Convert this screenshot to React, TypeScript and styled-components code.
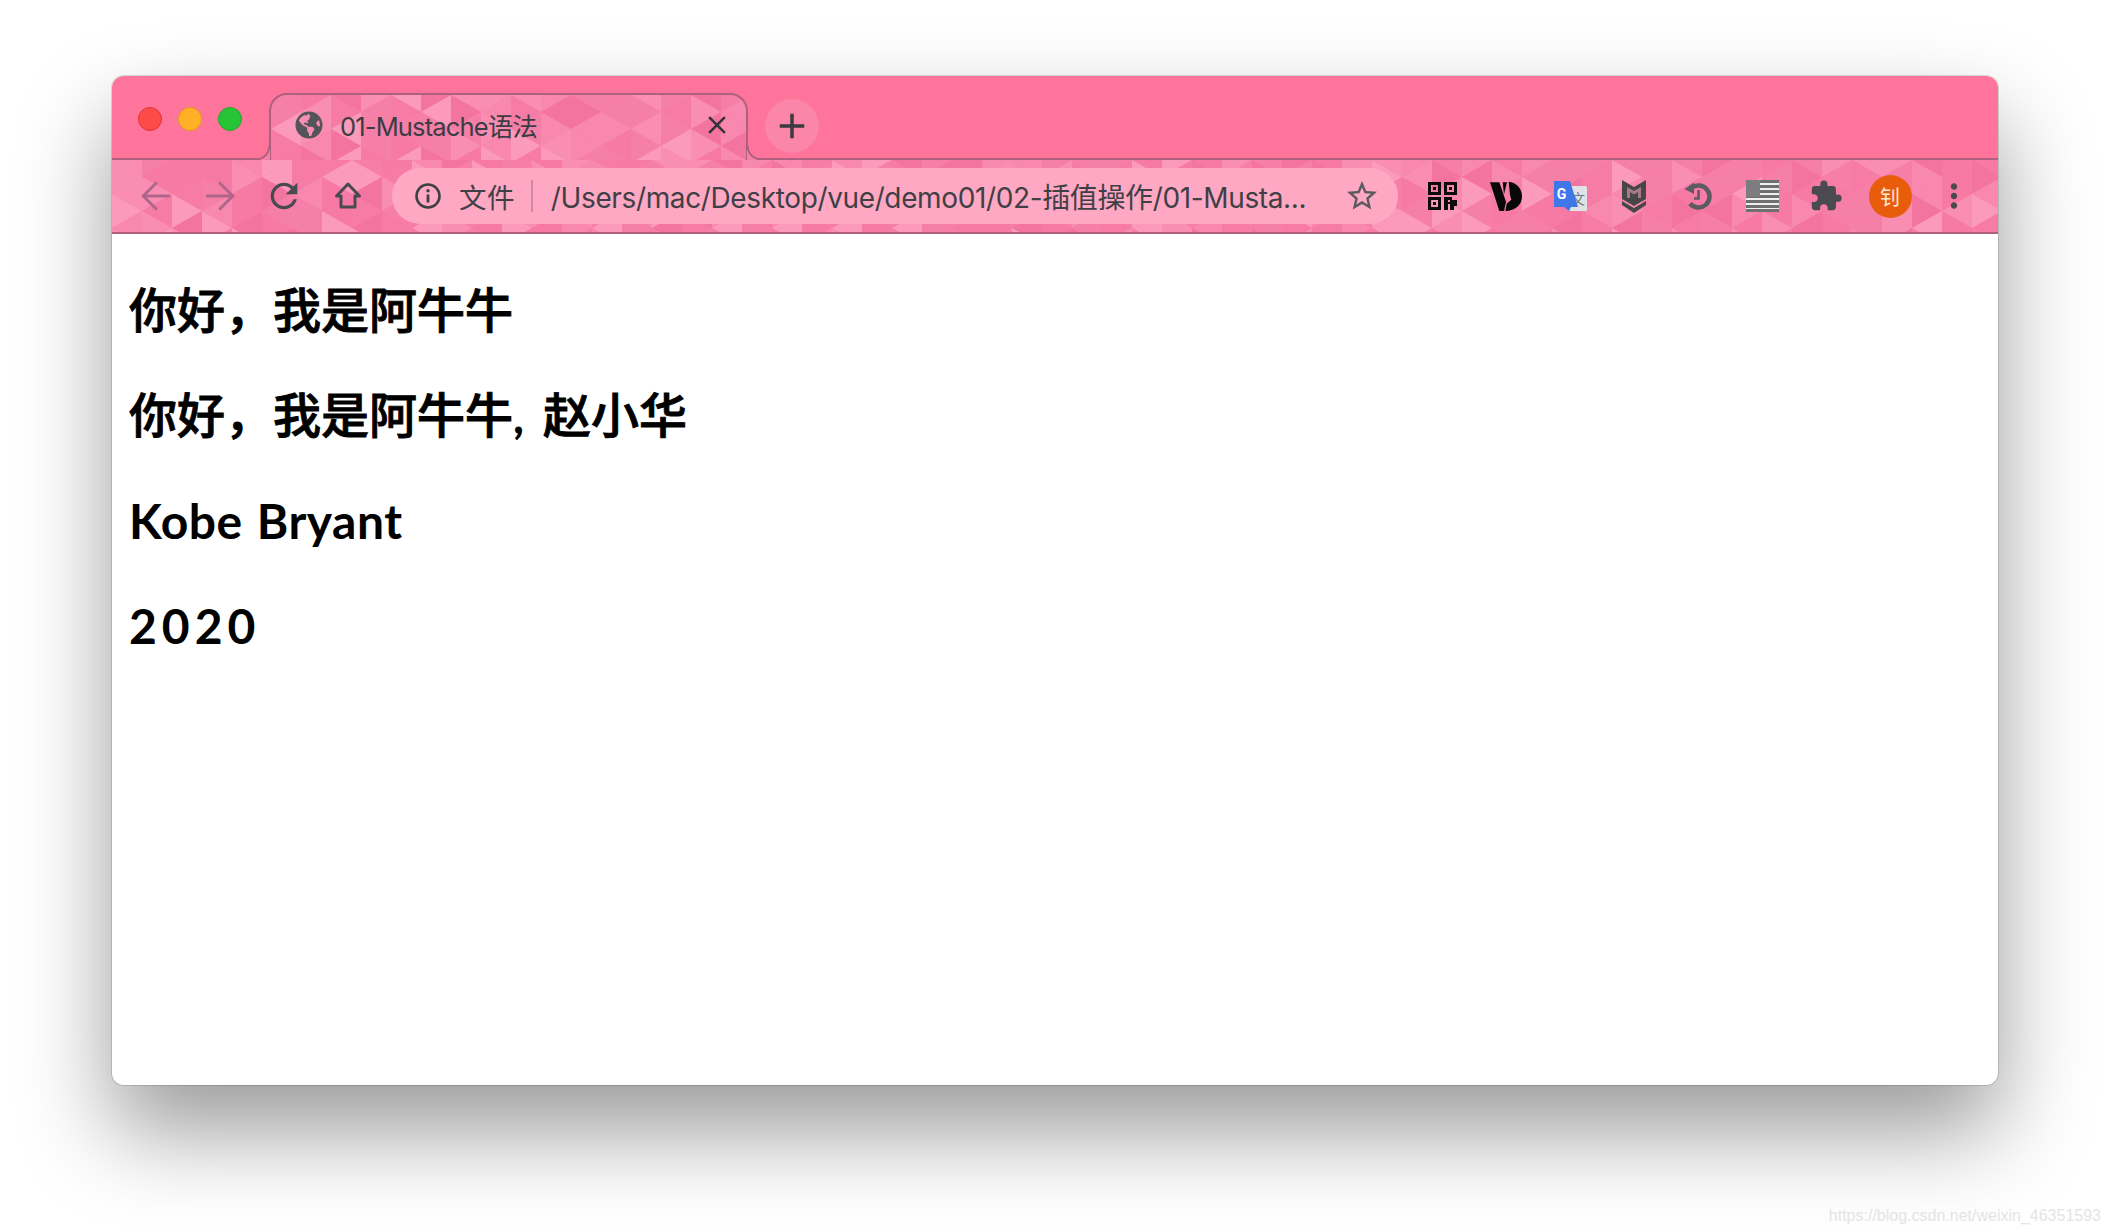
import React from 'react'
import styled, { createGlobalStyle } from 'styled-components'
import { ArrowLeft, ArrowRight } from 'lucide-react'
import { FaGlobeAmericas } from 'react-icons/fa'
import { MdAdd, MdClose, MdExtension, MdMoreVert, MdRefresh, MdStarBorder } from 'react-icons/md'

const BAR_PINK = '#ff749b'
const EDGE = '#b0607f'
const INK = '#4a4a50'

// the theme's triangle texture, same seed gives the same picture on every run
const trianglePattern = (seed: number, cols: number, rows: number) => {
  const palette = ['#f67fa8', '#f67fa8', '#f67aa4', '#f474a0', '#f888ae', '#f98eb2', '#fb9aba', '#f77ca5']
  let s = seed
  const next = () => {
    s = (s * 16807) % 2147483647
    return s / 2147483647
  }
  const w = 30
  const h = 34
  const shapes: string[] = []
  for (let i = 0; i < cols; i++) {
    const leftOff = i % 2 ? h / 2 : 0
    const rightOff = i % 2 ? 0 : h / 2
    for (let j = -1; j < rows; j++) {
      const x0 = i * w
      const x1 = x0 + w
      const a = j * h + leftOff
      const b = j * h + rightOff
      const up = `${x0},${a} ${x0},${a + h} ${x1},${b + (i % 2 ? h : 0)}`
      const down = `${x1},${b + (i % 2 ? h : 0)} ${x1},${b + (i % 2 ? h : 0) + h} ${x0},${a + h}`
      shapes.push(`<polygon points='${up}' fill='${palette[Math.floor(next() * palette.length)]}'/>`)
      shapes.push(`<polygon points='${down}' fill='${palette[Math.floor(next() * palette.length)]}'/>`)
    }
  }
  const svg = `<svg xmlns='http://www.w3.org/2000/svg' width='${cols * w}' height='${rows * h}'>${shapes.join('')}</svg>`
  return `url("data:image/svg+xml,${encodeURIComponent(svg)}")`
}

const TOOLBAR_PATTERN = trianglePattern(4711, 64, 3)
const TAB_PATTERN = trianglePattern(90210, 18, 3)

const GlobalStyle = createGlobalStyle`
  html, body {
    margin: 0;
    background: #fff;
    overflow: hidden;
  }
`

const UI_FONT = `Inter, "Noto Sans CJK SC", sans-serif`

const Page = styled.div`
  position: relative;
  box-sizing: border-box;
  width: 2110px;
  height: 1232px;
  padding: 76px 112px 0;
  background: #fff;
`

const Window = styled.div`
  display: flex;
  flex-direction: column;
  height: 1009px;
  border-radius: 12px;
  overflow: hidden;
  background: #fff;
  box-shadow: 0 0 0 1px rgba(0, 0, 0, 0.13), 0 46px 92px 0 rgba(0, 0, 0, 0.4);
`

const TitleBar = styled.div`
  display: flex;
  align-items: flex-end;
  box-sizing: border-box;
  height: 84px;
  padding-left: 26px;
  background: ${BAR_PINK};
  border-bottom: 2px solid ${EDGE};
`

const Lights = styled.div`
  display: flex;
  gap: 16px;
  align-self: flex-start;
  margin-top: 31px;
`

const Light = styled.span<{ $fill: string; $rim: string }>`
  box-sizing: border-box;
  width: 24px;
  height: 24px;
  border-radius: 50%;
  background: ${p => p.$fill};
  border: 1px solid ${p => p.$rim};
`

const Tab = styled.div`
  position: relative;
  display: flex;
  align-items: center;
  box-sizing: border-box;
  width: 479px;
  height: 67px;
  margin: 0 0 -2px 27px;
  padding: 0 14px 5px 24px;
  border: 2px solid ${EDGE};
  border-bottom: 0;
  border-radius: 18px 18px 0 0;
  background: #f67fa8 ${TAB_PATTERN};
  color: #3c3c44;

  &::before,
  &::after {
    content: '';
    position: absolute;
    bottom: 0;
    width: 14px;
    height: 14px;
  }
  &::before {
    left: -15px;
    background: radial-gradient(circle at 0 0, ${BAR_PINK} 12px, ${EDGE} 12.6px, ${EDGE} 14px, #f67fa8 14.6px);
  }
  &::after {
    right: -15px;
    background: radial-gradient(circle at 100% 0, ${BAR_PINK} 12px, ${EDGE} 12.6px, ${EDGE} 14px, #f67fa8 14.6px);
  }
`

const TabTitle = styled.span`
  margin: 0 0 2px 17px;
  font: 400 25.5px ${UI_FONT};
  letter-spacing: -0.85px;
  white-space: nowrap;
`

const TabClose = styled.span`
  display: flex;
  margin-left: auto;
  color: #33333a;
`

const NewTab = styled.span`
  display: flex;
  align-items: center;
  justify-content: center;
  align-self: flex-start;
  width: 54px;
  height: 54px;
  margin: 23px 0 0 17px;
  border-radius: 50%;
  background: #fb86a9;
  color: #3a3a40;
`

const Toolbar = styled.div`
  display: flex;
  align-items: center;
  box-sizing: border-box;
  height: 74px;
  padding: 0 12px;
  background: #f67fa8 ${TOOLBAR_PATTERN};
  border-bottom: 2px solid ${EDGE};
`

const NavButton = styled.span<{ $dim?: boolean }>`
  display: flex;
  align-items: center;
  justify-content: center;
  flex: none;
  width: 64px;
  color: ${p => (p.$dim ? '#b0668a' : INK)};
`

const Omnibox = styled.div`
  display: flex;
  flex: 1;
  align-items: center;
  height: 56px;
  margin: 0 12px;
  padding: 0 18px 0 22px;
  border-radius: 28px;
  background: #ffa8c3;
  color: #3f3f46;
`

const Scheme = styled.span`
  margin-left: 17px;
  font: 400 27.5px ${UI_FONT};
  letter-spacing: 0.4px;
  white-space: nowrap;
`

const Divider = styled.span`
  width: 2px;
  height: 32px;
  margin: 0 18px 0 16px;
  background: #cf8aa4;
`

const Url = styled.span`
  flex: 1;
  font: 400 28px ${UI_FONT};
  letter-spacing: -0.37px;
  white-space: nowrap;
`

const Avatar = styled.span`
  display: flex;
  align-items: center;
  justify-content: center;
  width: 43px;
  height: 43px;
  border-radius: 50%;
  background: #e85d0c;
  color: #ffe9dc;
  font: 400 20px "Noto Sans CJK SC", sans-serif;
`

const Content = styled.main`
  display: flex;
  flex-direction: column;
  gap: 51.4px;
  padding: 49px 17px;
`

const Heading = styled.h2<{ $spacing?: number; $word?: number; $weight?: number; $stroke?: number }>`
  margin: 0;
  font: ${p => p.$weight ?? 500} 48px/54px Lato, "Noto Sans CJK SC", sans-serif;
  letter-spacing: ${p => p.$spacing ?? 0}px;
  word-spacing: ${p => p.$word ?? 7}px;
  -webkit-text-stroke: ${p => p.$stroke ?? 0.9}px #000;
  color: #000;
`

const Watermark = styled.span`
  position: absolute;
  right: 9px;
  bottom: 7px;
  font: 400 16px "Liberation Sans", Arial, sans-serif;
  color: #e4e4e4;
`

const HomeIcon = () => (
  <svg width="30" height="30" viewBox="0 0 30 30" fill="none" stroke="currentColor" strokeWidth="3" strokeLinejoin="round">
    <path d="M15 3 3.5 15H8v11h14V15h4.500z" />
  </svg>
)

const InfoIcon = () => (
  <svg width="28" height="28" viewBox="0 0 28 28" fill="none" stroke="currentColor" style={{ flex: 'none' }}>
    <circle cx="14" cy="14" r="11.500" strokeWidth="2.600" />
    <path d="M14 12.500v8" strokeWidth="2.800" />
    <circle cx="14" cy="8.800" r="1.700" fill="currentColor" stroke="none" />
  </svg>
)

const QrIcon = () => (
  <svg width="29" height="28" viewBox="0 0 29 28" fill="#0c0c0c">
    <path fillRule="evenodd" d="M0 0h13v13H0zM3 3v7h7V3z M16 0h13v13H16zM19 3v7h7V3z M0 15h13v13H0zM3 18v7h7v-7z" />
    <rect x="5" y="5" width="3" height="3" />
    <rect x="21" y="5" width="3" height="3" />
    <rect x="5" y="20" width="3" height="3" />
    <path d="M16 15h8v3h5v6h-3v4h-4v-6h-2v6h-4zM20 18v2h2v-2z" fillRule="evenodd" />
  </svg>
)

const VdIcon = () => (
  <svg width="32" height="30" viewBox="0 0 96 90" fill="#080808">
    <path d="M0 4h28l20 58-6 28H28z" />
    <path d="M38 4h13L42 40z" />
    <path d="M56 2c24 3 40 20 40 44 0 26-20 44-50 44l4-22 14-12-4-14z" />
  </svg>
)

const TranslateIcon = () => (
  <svg width="34" height="32" viewBox="0 0 34 32">
    <rect x="16" y="6" width="18" height="25" rx="1.500" fill="#dfe3e6" />
    <text x="25" y="24" textAnchor="middle" fontSize="14" fontFamily="'Noto Sans CJK SC', sans-serif" fill="#70777f">文</text>
    <path d="M1 1h16l8 26H18l-2 4-5-4H1z" fill="#3f77e8" />
    <text x="8.500" y="19" textAnchor="middle" fontSize="14" fontWeight="700" fontFamily="Roboto, sans-serif" fill="#fff">G</text>
  </svg>
)

const ShieldIcon = () => (
  <svg width="24" height="33" viewBox="0 0 24 33">
    <path d="M0 0l12 7 12-7v19l-12 7-12-7z" fill="#474747" />
    <path d="M5 18V7l7 4 7-4v11h-3v-6l-4 2.500L8 12v6z" fill="#f4a6bc" opacity="0.55" />
    <path d="M0 21l12 7 12-7v4l-12 8-12-8z" fill="#474747" />
  </svg>
)

const RestoreIcon = () => (
  <svg width="28" height="28" viewBox="0 0 28 28" fill="none" stroke="#5c5c60">
    <path d="M7 6.500A11 11 0 1 1 6 21.500" strokeWidth="4.500" />
    <path d="M0.500 7 10 0.500V12z" fill="#5c5c60" stroke="none" />
    <path d="M14.500 8v8.500H10" strokeWidth="2.600" />
  </svg>
)

const FlagIcon = () => (
  <svg width="33" height="32" viewBox="0 0 33 32">
    <rect width="33" height="32" fill="#efeff0" />
    {[0, 5, 10, 15, 20, 25, 29].map(y => (
      <rect key={y} y={y} width="33" height="3" fill="#6f6f72" />
    ))}
    <rect width="14" height="17" fill="#7d7d80" />
  </svg>
)

export default function App() {
  return (
    <Page>
      <GlobalStyle />
      <Window>
        <TitleBar>
          <Lights>
            <Light $fill="#ff4b47" $rim="#d8373a" />
            <Light $fill="#ffb025" $rim="#e09a22" />
            <Light $fill="#27c437" $rim="#1fa82c" />
          </Lights>
          <Tab>
            <FaGlobeAmericas size={28} color="#54545a" />
            <TabTitle>01-Mustache语法</TabTitle>
            <TabClose><MdClose size={30} /></TabClose>
          </Tab>
          <NewTab><MdAdd size={42} /></NewTab>
        </TitleBar>
        <Toolbar>
          <NavButton $dim><ArrowLeft size={44} strokeWidth={1.6} /></NavButton>
          <NavButton $dim><ArrowRight size={44} strokeWidth={1.6} /></NavButton>
          <NavButton><MdRefresh size={40} /></NavButton>
          <NavButton><HomeIcon /></NavButton>
          <Omnibox>
            <InfoIcon />
            <Scheme>文件</Scheme>
            <Divider />
            <Url>/Users/mac/Desktop/vue/demo01/02-插值操作/01-Musta...</Url>
            <MdStarBorder size={36} color="#5a5a60" />
          </Omnibox>
          <NavButton><QrIcon /></NavButton>
          <NavButton><VdIcon /></NavButton>
          <NavButton><TranslateIcon /></NavButton>
          <NavButton><ShieldIcon /></NavButton>
          <NavButton><RestoreIcon /></NavButton>
          <NavButton><FlagIcon /></NavButton>
          <NavButton><MdExtension size={34} /></NavButton>
          <NavButton><Avatar>钊</Avatar></NavButton>
          <NavButton><MdMoreVert size={38} /></NavButton>
        </Toolbar>
        <Content>
          <Heading>你好，我是阿牛牛</Heading>
          <Heading>你好，我是阿牛牛, 赵小华</Heading>
          <Heading $weight={700} $spacing={0.5} $word={2} $stroke={0}>Kobe Bryant</Heading>
          <Heading $weight={700} $spacing={5} $stroke={0}>2020</Heading>
        </Content>
      </Window>
      <Watermark>https://blog.csdn.net/weixin_46351593</Watermark>
    </Page>
  )
}
